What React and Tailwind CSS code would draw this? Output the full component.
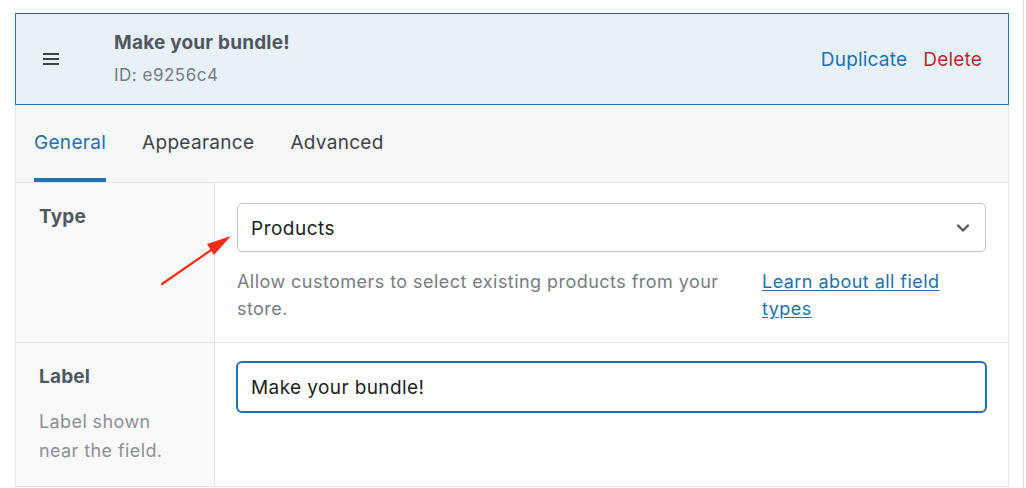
import { ChevronDown } from 'lucide-react';

const tabs = ['General', 'Appearance', 'Advanced'];

function Hamburger() {
  return (
    <svg width="16" height="14" viewBox="0 0 16 14" className="text-[#3c434a]">
      <rect x="0" y="1" width="16" height="2" fill="currentColor" />
      <rect x="0" y="6" width="16" height="2" fill="currentColor" />
      <rect x="0" y="11" width="16" height="2" fill="currentColor" />
    </svg>
  );
}

function Arrow() {
  // red annotation arrow pointing at the select
  return (
    <svg className="absolute left-[155px] top-[228px] pointer-events-none" width="85" height="65" viewBox="0 0 85 65">
      <line x1="7" y1="56" x2="62" y2="18" stroke="#f52f17" strokeWidth="2.2" strokeLinecap="round" />
      <polygon points="76,8 52,16 59,27" fill="#f52f17" />
    </svg>
  );
}

export default function App() {
  return (
    <div
      className="relative w-[1026px] h-[488px] overflow-hidden bg-white"
      style={{ fontFamily: 'Inter, "Noto Sans", sans-serif' }}
    >
      <div className="w-[1024px] h-full border-r border-[#dcdcde] pt-[13px] pl-[15px]">
        <div className="w-[994px]">
          {/* Header */}
          <div className="h-[92px] flex items-center border border-[#2271b1] bg-[#e8f0f8] pl-[27px] pr-[26px]">
            <Hamburger />
            <div className="ml-[55px] flex-1">
              <div className="text-[19px] font-bold leading-6 tracking-[0.2px] text-[#50575e] -mt-[3px]">Make your bundle!</div>
              <div className="mt-[10px] text-[17px] leading-5 tracking-[0.5px] text-[#787c82]">ID: e9256c4</div>
            </div>
            <div className="flex gap-4 text-[19px] leading-6 tracking-[0.2px] pt-[2px]">
              <span className="text-[#2271b1]">Duplicate</span>
              <span className="text-[#b32d2e]">Delete</span>
            </div>
          </div>

          {/* Body */}
          <div className="border-x border-[#e2e4e7]">
            {/* Tabs */}
            <div className="h-[78px] bg-[#f6f7f7] border-b border-[#e2e4e7] flex gap-9 px-[18px]">
              {tabs.map((t, i) => (
                <div
                  key={t}
                  className={`flex items-center text-[19px] tracking-[0.3px] border-b-4 pt-[4px] ${
                    i === 0 ? 'text-[#2271b1] border-[#2271b1]' : 'text-[#3c434a] border-transparent'
                  }`}
                >
                  {t}
                </div>
              ))}
            </div>

            {/* Type row */}
            <div className="grid grid-cols-[199px_1fr] border-b border-[#e2e4e7]">
              <div className="bg-[#f9f9f9] border-r border-[#e2e4e7] pl-[23px] pt-[22px] h-[159px]">
                <div className="text-[19px] font-bold leading-6 tracking-[0.2px] text-[#50575e]">Type</div>
              </div>
              <div className="pl-[22px] pr-[22px] pt-[20px]">
                <div className="h-[49px] flex items-center justify-between border border-[#c3c4c7] rounded-[5px] pl-[13px] pr-[12px] shadow-[0_1px_1px_rgba(0,0,0,0.04)]">
                  <span className="text-[19px] tracking-[0.5px] text-[#1e1e1e] pt-[3px]">Products</span>
                  <ChevronDown size={20} strokeWidth={2.8} className="text-[#50575e]" />
                </div>
                <div className="mt-[16px] grid grid-cols-[1fr_224px] gap-[22px] text-[18px] leading-[27px] tracking-[0.45px]">
                  <p className="text-[#787c82]">Allow customers to select existing products from your store.</p>
                  <a className="text-[#2271b1] underline underline-offset-2 pr-[24px]">Learn about all field types</a>
                </div>
              </div>
            </div>

            {/* Label row */}
            <div className="grid grid-cols-[199px_1fr] border-b border-[#e2e4e7]">
              <div className="bg-[#f9f9f9] border-r border-[#e2e4e7] pl-[23px] pt-[22px] h-[143px]">
                <div className="text-[19px] font-bold leading-6 tracking-[0.2px] text-[#50575e]">Label</div>
                <div className="mt-[18px] text-[18px] leading-[29px] tracking-[0.4px] text-[#8c8f94]">
                  Label shown
                  <br />
                  near the field.
                </div>
              </div>
              <div className="pl-[21px] pr-[21px] pt-[18px]">
                <div className="h-[52px] flex items-center border-2 border-[#2271b1] rounded-[6px] px-[13px]">
                  <span className="text-[19px] tracking-[0.4px] text-[#1e1e1e] pt-[2px]">Make your bundle!</span>
                </div>
              </div>
            </div>
          </div>
        </div>
      </div>
      <Arrow />
    </div>
  );
}
